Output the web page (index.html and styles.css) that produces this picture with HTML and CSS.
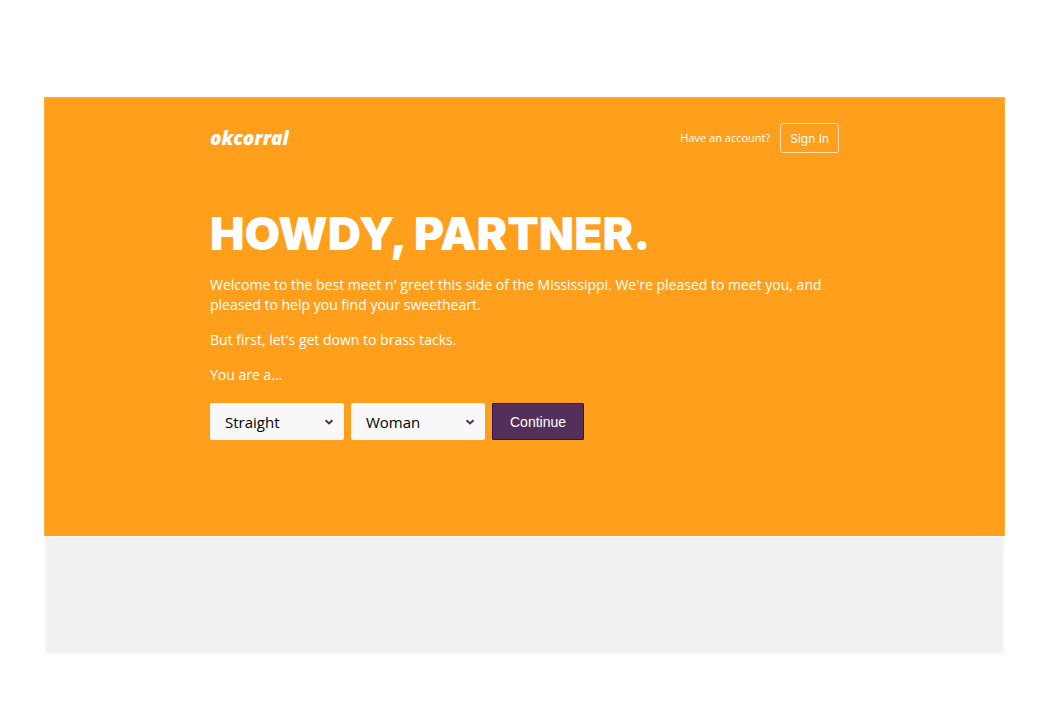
FILE: index.html
```html
<!DOCTYPE html>
<html lang="en">
<head>
<meta charset="utf-8">
<title>okcorral</title>
<link rel="stylesheet" href="styles.css">
</head>
<body>
<div class="window">
  <div class="hero">
    <div class="container">
      <header class="topbar">
        <a class="logo" href="#">okcorral</a>
        <div class="account">
          <span>Have an account?</span>
          <button class="sign-in" type="button">Sign In</button>
        </div>
      </header>
      <main>
        <h1 class="title">HOWDY, PARTNER.</h1>
        <p class="copy">Welcome to the best meet n' greet this side of the Mississippi. We're pleased to meet you, and pleased to help you find your sweetheart.</p>
        <p class="copy">But first, let's get down to brass tacks.</p>
        <p class="copy" id="you-are">You are a...</p>
        <form class="intro-form" aria-labelledby="you-are">
          <div class="picker">
            <select class="picker-select" aria-label="Orientation"><option>Straight</option><option>Gay</option><option>Bisexual</option></select>
            <svg class="picker-arrow" viewBox="0 0 10 6" aria-hidden="true"><path d="M1.5 1.2 5 4.5 8.5 1.2"/></svg>
          </div>
          <div class="picker">
            <select class="picker-select" aria-label="Gender"><option>Woman</option><option>Man</option></select>
            <svg class="picker-arrow" viewBox="0 0 10 6" aria-hidden="true"><path d="M1.5 1.2 5 4.5 8.5 1.2"/></svg>
          </div>
          <button class="continue" type="button">Continue</button>
        </form>
      </main>
    </div>
  </div>
  <div class="below"></div>
</div>
</body>
</html>
```
FILE: styles.css
```css
* {
  box-sizing: border-box;
}

body {
  margin: 0;
  padding: 97px 44px 65px;
  background: #fff;
  color: #fff;
  font-family: "Open Sans", sans-serif;
  font-size: 14px;
  line-height: 20px;
}

.hero {
  padding: 25px 20px 96px;
  border: 1px solid #ffb13f;
  border-width: 1px 1px 0;
  background: #ff9f1c;
}

.container {
  max-width: 629px;
  margin: 0 auto;
}

.topbar {
  display: flex;
  align-items: center;
  justify-content: space-between;
}

.logo {
  color: #fff;
  font-size: 19px;
  font-style: italic;
  font-weight: 800;
  text-decoration: none;
}

.account {
  display: flex;
  align-items: center;
  gap: 10px;
  font-size: 11px;
}

.sign-in {
  height: 30px;
  padding: 0 9px;
  border: 1px solid #ffe0b5;
  border-radius: 3px;
  background: transparent;
  color: #fff;
  font-family: Inter, sans-serif;
  font-size: 12px;
}

.title {
  margin: 51px 0 13px;
  font-family: Inter, sans-serif;
  font-size: 46px;
  font-weight: 900;
  line-height: 58px;
}

.copy {
  margin: 0 0 15px;
}

.intro-form {
  display: flex;
  flex-wrap: wrap;
  gap: 7px;
  margin-top: 18px;
}

.picker {
  display: grid;
  align-items: center;
  width: 134px;
}

.picker-select {
  grid-area: 1 / 1;
  width: 100%;
  height: 37px;
  padding: 0 15px;
  border: 0;
  border-radius: 2px;
  background: #f8f8f8;
  color: #000;
  appearance: none;
  font-family: "Open Sans", sans-serif;
  font-size: 15px;
}

.picker-arrow {
  grid-area: 1 / 1;
  justify-self: end;
  width: 10px;
  height: 6px;
  margin-right: 10px;
  fill: none;
  stroke: #532b5e;
  stroke-width: 2;
  pointer-events: none;
}

.continue {
  height: 37px;
  padding: 0 17px;
  border: 1px solid #35145a;
  border-radius: 1px;
  background: #552f5b;
  color: #fff;
  font-family: "Liberation Sans", sans-serif;
  font-size: 14px;
}

.below {
  height: 119px;
  padding: 1px;
  border: 1px solid #f6f6f6;
  border-top: 0;
  background: #f1f1f1 content-box;
}
```
